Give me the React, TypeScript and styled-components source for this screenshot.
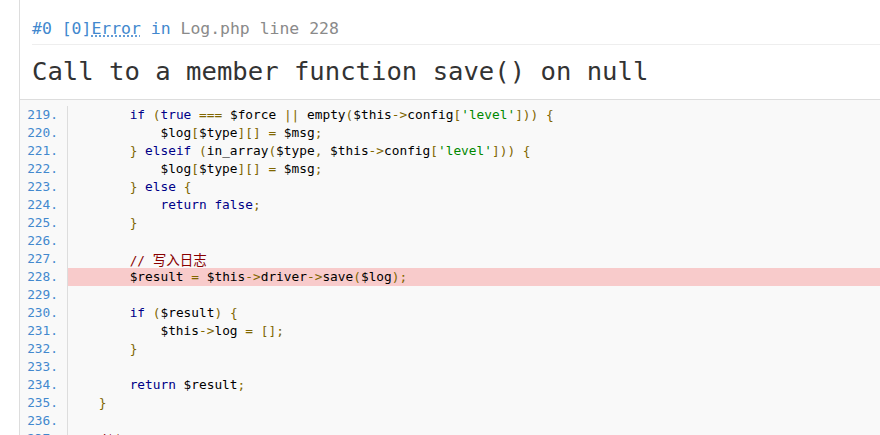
import React from "react";
import styled, { createGlobalStyle } from "styled-components";

const Global = createGlobalStyle`
  html, body { margin: 0; padding: 0; background: #fff; }
  body { overflow: hidden; }
`;

const MONO = `"DejaVu Sans Mono", "Noto Sans CJK SC", monospace`;

const Page = styled.div`
  height: 435px;
  overflow: hidden;
  padding-left: 19px;
  font-family: ${MONO};
`;

const Exception = styled.div`
  margin-right: -40px;
`;

const Message = styled.div`
  border-left: 1px solid #ddd;
  border-right: 1px solid #ddd;
  padding: 0 12px 10px;
`;

const Heading = styled.h2`
  margin: 0;
  padding: 18px 0 4px;
  font-size: 16.45px;
  line-height: 22px;
  font-weight: 400;
  color: #4288ce;
  border-bottom: 1px solid #eee;
  white-space: pre;
`;

const Abbr = styled.abbr`
  text-decoration: underline dotted;
  text-underline-offset: 2px;
  cursor: help;
`;

const FileLink = styled.a`
  color: #8a8a8a;
  text-decoration: none;
`;

const Title = styled.h1`
  margin: 8px 0 0;
  font-size: 25.6px;
  line-height: 36px;
  font-weight: 400;
  color: #333;
  white-space: pre;
`;

const Source = styled.div`
  border: 1px solid #ddd;
  background: #f9f9f9;
  padding-top: 6px;
`;

const Row = styled.div`
  display: grid;
  grid-template-columns: 47px 1fr;
  height: 18px;
  line-height: 18px;
  font-size: 12.8px;
`;

const LineNo = styled.span`
  color: #4288ce;
  text-align: right;
  padding-right: 9px;
`;

const Code = styled.code<{ $error?: boolean }>`
  font-family: ${MONO};
  border-left: 1px solid #ddd;
  white-space: pre;
  color: #000;
  background: ${(p) => (p.$error ? "#f8cbcb" : "transparent")};
`;

type Kind = "kwd" | "pln" | "pun" | "str" | "com";

const COLORS: Record<Kind, string> = {
  kwd: "#000088",
  pln: "#000000",
  pun: "#806600",
  str: "#008800",
  com: "#880000",
};

const Tok = styled.span<{ $kind: Kind }>`
  color: ${(p) => COLORS[p.$kind]};
`;

const Cjk = styled.span`
  font-family: "Noto Sans CJK SC", sans-serif;
  font-size: 13.5px;
`;

const KEYWORDS = new Set(["if", "elseif", "else", "true", "false", "return"]);

type Token = { k: Kind; t: string };

function tokenize(line: string): Token[] {
  const out: Token[] = [];
  const re = /(\/\/.*|\/\*.*)|('[^']*')|([A-Za-z_$][\w$]*)|(\s+)|(.)/g;
  let m: RegExpExecArray | null;
  while ((m = re.exec(line))) {
    if (m[1]) out.push({ k: "com", t: m[1] });
    else if (m[2]) out.push({ k: "str", t: m[2] });
    else if (m[3]) out.push({ k: KEYWORDS.has(m[3]) ? "kwd" : "pln", t: m[3] });
    else if (m[4]) out.push({ k: "pln", t: m[4] });
    else out.push({ k: "pun", t: m[5] });
  }
  return out;
}

function renderText(t: string) {
  const parts = t.split(/([\u4e00-\u9fff]+)/);
  return parts.map((p, i) =>
    /[\u4e00-\u9fff]/.test(p) ? <Cjk key={i}>{p}</Cjk> : <React.Fragment key={i}>{p}</React.Fragment>
  );
}

const START = 219;
const ERROR_LINE = 228;

const LINES = [
  "        if (true === $force || empty($this->config['level'])) {",
  "            $log[$type][] = $msg;",
  "        } elseif (in_array($type, $this->config['level'])) {",
  "            $log[$type][] = $msg;",
  "        } else {",
  "            return false;",
  "        }",
  "",
  "        // 写入日志",
  "        $result = $this->driver->save($log);",
  "",
  "        if ($result) {",
  "            $this->log = [];",
  "        }",
  "",
  "        return $result;",
  "    }",
  "",
  "    /**",
];

export default function App() {
  return (
    <>
      <Global />
      <Page>
        <Exception>
          <Message>
            <Heading>
              #0 [0]<Abbr title="Error">Error</Abbr> in{" "}
              <FileLink title="Log.php">Log.php line 228</FileLink>
            </Heading>
            <Title>Call to a member function save() on null</Title>
          </Message>
          <Source>
            {LINES.map((line, i) => {
              const n = START + i;
              return (
                <Row key={n}>
                  <LineNo>{n}.</LineNo>
                  <Code $error={n === ERROR_LINE}>
                    {tokenize(line).map((tk, j) => (
                      <Tok key={j} $kind={tk.k}>
                        {renderText(tk.t)}
                      </Tok>
                    ))}
                    {line === "" ? " " : null}
                  </Code>
                </Row>
              );
            })}
          </Source>
        </Exception>
      </Page>
    </>
  );
}
